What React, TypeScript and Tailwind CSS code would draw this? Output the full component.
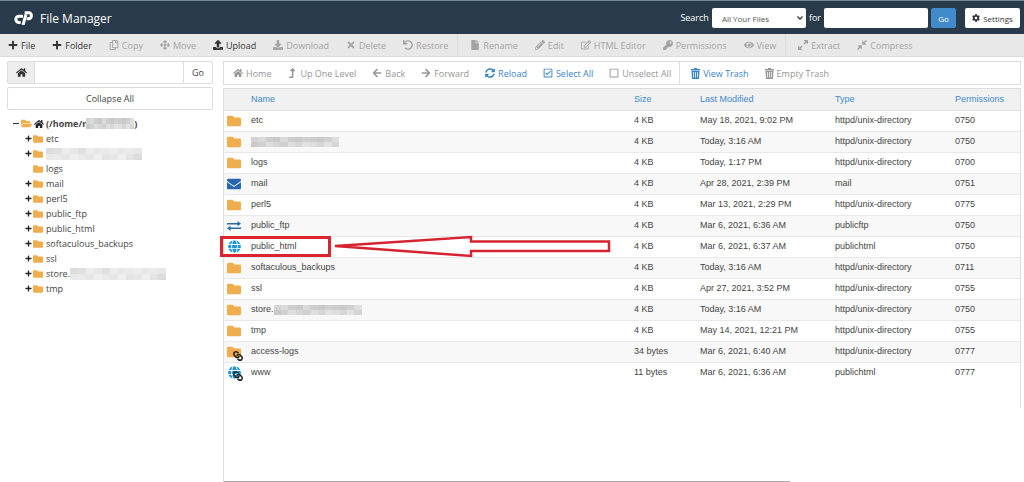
import type { ReactNode } from "react";
import {
  FaArrowLeft, FaArrowRight, FaArrowsAlt, FaCog, FaDownload, FaEye, FaFile, FaFolder,
  FaFolderOpen, FaGlobe, FaHome, FaKey, FaLevelUpAlt, FaLink, FaPencilAlt, FaPlus,
  FaRegCheckSquare, FaRegCopy, FaRegEdit, FaRegSquare, FaSyncAlt, FaTimes, FaUndo,
  FaUpload, FaEnvelope,
} from "react-icons/fa";

function Logo() {
  return (
    <svg viewBox="0 0 60 42" className="h-[14px] w-[20px]" fill="none" stroke="#fff" strokeWidth="9" aria-hidden="true">
      <path d="M27 15.500H15a9.500 9.500 0 0 0 0 19H20" />
      <path d="M27 42 36 10" />
      <path d="M32 5H46a9 9.500 0 0 1 0 18H38" />
    </svg>
  );
}

function TrashIcon() {
  return (
    <svg viewBox="0 0 18 22" className="h-[11px] w-[9px]" aria-hidden="true">
      <path fill="currentColor" fillRule="evenodd" d="M6 0h6v2h6v3H0V2h6zM1 6h16l-1 16H2zM4.500 8v11H6V8zm3.700 0v11h1.600V8zM12 8v11h1.500V8z" />
    </svg>
  );
}

function ExtractIcon() {
  return (
    <svg viewBox="0 0 20 20" className="size-[10px]" aria-hidden="true">
      <path d="m4 16 4-4M12 8l4-4" stroke="currentColor" strokeWidth="3" />
      <path fill="currentColor" d="M11 0h9v9zM0 11v9h9z" />
    </svg>
  );
}

function CompressIcon() {
  return (
    <svg viewBox="0 0 20 20" className="size-[10px]" aria-hidden="true">
      <path d="m1 19 6-6M13 7l6-6" stroke="currentColor" strokeWidth="3" />
      <path fill="currentColor" d="M10.500 1v8.500H19zM1 10.500h8.500V19z" />
    </svg>
  );
}

function ExchangeIcon() {
  return (
    <svg viewBox="0 0 28 20" className="h-[10px] w-[14px]" fill="#2a6c9f" aria-hidden="true">
      <path d="M0 4h21V0l7 5.500-7 5V7H0zM28 13H7v-3.500l-7 5L7 20v-4h21z" />
    </svg>
  );
}

type Tool = { label: string; icon: ReactNode; on?: boolean; split?: boolean };

const fileTools: Tool[] = [
  { label: "File", icon: <FaPlus />, on: true },
  { label: "Folder", icon: <FaPlus />, on: true },
  { label: "Copy", icon: <FaRegCopy /> },
  { label: "Move", icon: <FaArrowsAlt /> },
  { label: "Upload", icon: <FaUpload />, on: true },
  { label: "Download", icon: <FaDownload /> },
  { label: "Delete", icon: <FaTimes /> },
  { label: "Restore", icon: <FaUndo />, split: true },
  { label: "Rename", icon: <FaFile /> },
  { label: "Edit", icon: <FaPencilAlt /> },
  { label: "HTML Editor", icon: <FaRegEdit /> },
  { label: "Permissions", icon: <FaKey /> },
  { label: "View", icon: <FaEye />, split: true },
  { label: "Extract", icon: <ExtractIcon /> },
  { label: "Compress", icon: <CompressIcon /> },
];

const navTools: Tool[] = [
  { label: "Home", icon: <FaHome /> },
  { label: "Up One Level", icon: <FaLevelUpAlt /> },
  { label: "Back", icon: <FaArrowLeft /> },
  { label: "Forward", icon: <FaArrowRight /> },
  { label: "Reload", icon: <FaSyncAlt />, on: true },
  { label: "Select All", icon: <FaRegCheckSquare />, on: true },
  { label: "Unselect All", icon: <FaRegSquare />, split: true },
  { label: "View Trash", icon: <TrashIcon />, on: true },
  { label: "Empty Trash", icon: <TrashIcon /> },
];

const shades = ["bg-[#d4d4d4]", "bg-[#dedede]", "bg-[#cdcdcd]", "bg-[#e2e2e2]", "bg-[#d0d0d0]", "bg-[#dadada]", "bg-[#d6d6d6]", "bg-[#c9c9c9]"];
const paleShades = ["bg-[#dcdcdc]", "bg-[#e6e6e6]", "bg-[#ededed]", "bg-[#e4e4e4]", "bg-[#eaeaea]", "bg-[#e0e0e0]", "bg-[#efefef]", "bg-[#e8e8e8]"];

function Redacted({ size, pale }: { size: string; pale?: boolean }) {
  const tones = pale ? paleShades : shades;
  return (
    <span className={`grid grid-cols-12 overflow-hidden ${size}`}>
      {Array.from({ length: 24 }, (_, i) => (
        <span key={i} className={tones[(i * 5 + (i >> 2)) % tones.length]} />
      ))}
    </span>
  );
}

const tree: { name: string; hidden?: boolean; leaf?: boolean }[] = [
  { name: "etc" },
  { name: "", hidden: true },
  { name: "logs", leaf: true },
  { name: "mail" },
  { name: "perl5" },
  { name: "public_ftp" },
  { name: "public_html" },
  { name: "softaculous_backups" },
  { name: "ssl" },
  { name: "store.", hidden: true },
  { name: "tmp" },
];

type Kind = "folder" | "mail" | "ftp" | "web" | "folderLink" | "webLink";
type Entry = { kind: Kind; name: string; size: string; date: string; type: string; perm: string; hidden?: boolean; marked?: boolean };
const dir = "httpd/unix-directory";
const entries: Entry[] = [
  { kind: "folder", name: "etc", size: "4 KB", date: "May 18, 2021, 9:02 PM", type: dir, perm: "0750" },
  { kind: "folder", name: "", hidden: true, size: "4 KB", date: "Today, 3:16 AM", type: dir, perm: "0750" },
  { kind: "folder", name: "logs", size: "4 KB", date: "Today, 1:17 PM", type: dir, perm: "0700" },
  { kind: "mail", name: "mail", size: "4 KB", date: "Apr 28, 2021, 2:39 PM", type: "mail", perm: "0751" },
  { kind: "folder", name: "perl5", size: "4 KB", date: "Mar 13, 2021, 2:29 PM", type: dir, perm: "0775" },
  { kind: "ftp", name: "public_ftp", size: "4 KB", date: "Mar 6, 2021, 6:36 AM", type: "publicftp", perm: "0750" },
  { kind: "web", name: "public_html", marked: true, size: "4 KB", date: "Mar 6, 2021, 6:37 AM", type: "publichtml", perm: "0750" },
  { kind: "folder", name: "softaculous_backups", size: "4 KB", date: "Today, 3:16 AM", type: dir, perm: "0711" },
  { kind: "folder", name: "ssl", size: "4 KB", date: "Apr 27, 2021, 3:52 PM", type: dir, perm: "0755" },
  { kind: "folder", name: "store.", hidden: true, size: "4 KB", date: "Today, 3:16 AM", type: dir, perm: "0750" },
  { kind: "folder", name: "tmp", size: "4 KB", date: "May 14, 2021, 12:21 PM", type: dir, perm: "0755" },
  { kind: "folderLink", name: "access-logs", size: "34 bytes", date: "Mar 6, 2021, 6:40 AM", type: dir, perm: "0777" },
  { kind: "webLink", name: "www", size: "11 bytes", date: "Mar 6, 2021, 6:36 AM", type: "publichtml", perm: "0777" },
];

function EntryIcon({ kind }: { kind: Kind }) {
  return (
    <span className="relative flex w-[14px] justify-center text-[14px]">
      {(kind === "folder" || kind === "folderLink") && <FaFolder className="text-[#efad4d]" />}
      {kind === "mail" && <FaEnvelope className="text-[#2a66ae]" />}
      {kind === "ftp" && <ExchangeIcon />}
      {(kind === "web" || kind === "webLink") && <FaGlobe className="text-[13px] text-[#1e95d4]" />}
      {(kind === "folderLink" || kind === "webLink") && (
        <FaLink className="absolute -right-0.5 -bottom-0.5 rotate-90 text-[10px] text-[#222]" />
      )}
    </span>
  );
}

function Marker() {
  return (
    <>
      <span className="pointer-events-none absolute top-0 -left-[6px] h-[21px] w-[111px] border-3 border-[#dc2430]" />
      <svg viewBox="0 0 282 24" className="pointer-events-none absolute -top-px left-[103px] h-[24px] w-[282px]" fill="none" stroke="#d52430" strokeWidth="2.500" aria-hidden="true">
        <path d="M6 11 142 2v4.500H280v9.500H142v5z" />
      </svg>
    </>
  );
}

export default function App() {
  return (
    <div className="flex min-h-screen flex-col bg-white font-['Open_Sans',sans-serif] text-[9px] leading-[15px] text-[#444]">
      <header className="flex h-[34px] items-center border-t border-[#71879a] bg-[#293a4a] pt-px pr-1 pl-[14px] text-white">
        <Logo />
        <h1 className="ml-[6px] text-[12px]">File Manager</h1>
        <form className="ml-auto flex items-center" onSubmit={(e) => e.preventDefault()}>
          <label htmlFor="scope" className="-mt-0.5">Search</label>
          <span className="relative ml-[3px] flex">
            <select id="scope" className="h-[20px] w-[94px] appearance-none rounded-[2px] bg-white pl-[10px] text-[8px] text-[#555]">
              <option>All Your Files</option>
            </select>
            <svg viewBox="0 0 12 8" className="pointer-events-none absolute top-2 right-[3px] h-[4px] w-[6px]" fill="none" stroke="#333" strokeWidth="2.500" aria-hidden="true">
              <path d="m1 1 5 5 5-5" />
            </svg>
          </span>
          <label htmlFor="query" className="-mt-0.5 ml-[3px]">for</label>
          <input id="query" type="text" className="ml-[3px] h-[20px] w-[104px] rounded-[2px] bg-white px-1 text-[#444]" />
          <button type="submit" className="ml-[3px] h-[20px] w-[25px] rounded-[2px] bg-[#428bca] text-[8px]">Go</button>
          <button type="button" className="ml-[9px] flex h-[20px] w-[55px] items-center justify-center gap-[3px] rounded-[2px] bg-white text-[8px] text-[#333]">
            <FaCog />Settings
          </button>
        </form>
      </header>

      <nav aria-label="File actions" className="flex h-[23px] items-stretch border-b border-[#dcdcdc] bg-[#e9e8e8]">
        {fileTools.map((t) => (
          <button key={t.label} type="button" className={`flex items-center gap-[3px] pr-[9px] pl-2 ${t.on ? "text-[#333]" : "text-[#a3a3a3]"} ${t.split ? "mr-1 border-r border-[#dcdcdc]" : ""}`}>
            <span className="text-[10px]">{t.icon}</span>
            {t.label}
          </button>
        ))}
      </nav>

      <div className="flex grow pt-1">
        <aside className="w-[213px] shrink-0 pl-[7px]">
          <form className="flex h-[23px] rounded-[2px] border border-[#dcdcdc]" onSubmit={(e) => e.preventDefault()}>
            <button type="button" aria-label="Home" className="flex w-[27px] items-center justify-center border-r border-[#dcdcdc] bg-[#eee] text-[11px] text-[#333]"><FaHome /></button>
            <input type="text" aria-label="Path" className="min-w-0 grow px-1" />
            <button type="submit" className="w-[29px] border-l border-[#dcdcdc]">Go</button>
          </form>
          <button type="button" className="mt-[3px] h-[23px] w-full rounded-[2px] border border-[#dcdcdc]">Collapse All</button>
          <div className="mt-[6px] flex h-[15px] items-center pl-[6px] font-bold">
            <span className="mr-[2px] h-px w-[6px] bg-[#333]" />
            <FaFolderOpen className="text-[11px] text-[#efad4d]" />
            <FaHome className="mr-[2px] ml-[2px] text-[10px] text-[#222]" />
            (/home/r<Redacted size="h-[11px] w-[48px]" />)
          </div>
          <ul>
            {tree.map((n, i) => (
              <li key={i} className="flex h-[15px] items-center pl-[18px]">
                <span className="flex w-[8px] text-[7px] text-[#222]">{!n.leaf && <FaPlus />}</span>
                <FaFolder className="mr-[3px] text-[10px] text-[#efad4d]" />
                {n.name}
                {n.hidden && <Redacted pale size="h-[12px] w-[96px]" />}
              </li>
            ))}
          </ul>
        </aside>

        <main className="mr-[3px] ml-[10px] flex min-w-0 grow flex-col">
          <nav aria-label="Navigation" className="flex h-[24px] shrink-0 items-stretch border border-[#dcdcdc] pl-px">
            {navTools.map((t) => (
              <button key={t.label} type="button" className={`flex items-center gap-[3px] px-2 ${t.on ? "text-[#3a84c4]" : "text-[#969696]"} ${t.split ? "mr-[3px] border-r border-[#dcdcdc]" : ""}`}>
                <span className="text-[10px]">{t.icon}</span>
                {t.label}
              </button>
            ))}
          </nav>

          <div className="mt-[3px] border-x border-t border-[#dcdcdc] pb-[25px] font-['Liberation_Sans',sans-serif]">
            <table className="w-full table-fixed border-collapse text-left">
              <thead>
                <tr className="h-[21px] border-b border-[#e0e0e0] bg-[#f1f1f1] text-[#428bca]">
                  <th aria-label="Kind" className="w-[27px] p-0" />
                  <th className="p-0 font-normal">Name</th>
                  <th className="w-[66px] p-0 font-normal">Size</th>
                  <th className="w-[135px] p-0 font-normal">Last Modified</th>
                  <th className="w-[120px] p-0 font-normal">Type</th>
                  <th className="w-[65px] p-0 font-normal">Permissions</th>
                </tr>
              </thead>
              <tbody>
                {entries.map((e, i) => (
                  <tr key={i} className="h-[21px] border-b border-[#e8e8e8] last:border-b-0 odd:bg-white even:bg-[#f8f8f8]">
                    <td className="py-0 pr-0 pl-[3px]"><EntryIcon kind={e.kind} /></td>
                    <td className="p-0">
                      <span className="flex items-center">
                        {e.name}
                        {e.hidden && <Redacted size="h-[10px] w-[88px]" />}
                      </span>
                      {e.marked && (
                        <span className="relative block h-0">
                          <span className="absolute -top-[18px] -left-[25px] block"><Marker /></span>
                        </span>
                      )}
                    </td>
                    <td className="p-0">{e.size}</td>
                    <td className="p-0">{e.date}</td>
                    <td className="p-0">{e.type}</td>
                    <td className="p-0">{e.perm}</td>
                  </tr>
                ))}
              </tbody>
            </table>
          </div>
          <div className="flex grow items-end border-l border-[#dcdcdc]">
            <div className="h-px w-[71%] bg-[#aaa]" />
          </div>
        </main>
      </div>
    </div>
  );
}
